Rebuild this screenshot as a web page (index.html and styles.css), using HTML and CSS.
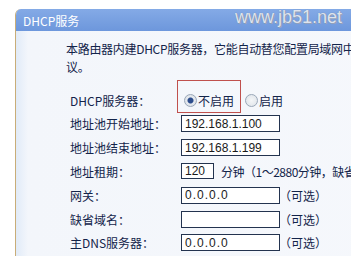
FILE: index.html
```html
<!DOCTYPE html>
<html lang="zh-CN">
<head>
  <meta charset="UTF-8">
  <meta name="viewport" content="width=device-width, initial-scale=1.0">
  <title>DHCP服务</title>
  <link rel="stylesheet" href="styles.css">
</head>
<body>
  <div class="page">
    <div class="panel">
      <div class="panel-head">
        <span class="title">DHCP服务</span>
        <span class="site">www.jb51.net</span>
      </div>
      <div class="panel-body">
        <p class="intro">本路由器内建DHCP服务器，它能自动替您配置局域网中各计算机的TCP/IP协<br>议。</p>
        <form class="form">
          <div class="row first">
            <label>DHCP服务器：</label>
            <div class="radios">
              <span class="annot"></span>
              <label class="opt"><input type="radio" name="dhcp" checked>不启用</label>
              <label class="opt"><input type="radio" name="dhcp">启用</label>
            </div>
          </div>
          <div class="row">
            <label for="start">地址池开始地址：</label>
            <input type="text" id="start" class="ip" value="192.168.1.100">
          </div>
          <div class="row">
            <label for="end">地址池结束地址：</label>
            <input type="text" id="end" class="ip" value="192.168.1.199">
          </div>
          <div class="row">
            <label for="lease">地址租期：</label>
            <input type="text" id="lease" class="short" value="120">
            <span class="hint">分钟（1～2880分钟，缺省为120分钟）</span>
          </div>
          <div class="row">
            <label for="gw">网关：</label>
            <input type="text" id="gw" class="ip dotted" value="0.0.0.0">
            <span class="opt-note">（可选）</span>
          </div>
          <div class="row">
            <label for="domain">缺省域名：</label>
            <input type="text" id="domain" class="ip" value="">
            <span class="opt-note">（可选）</span>
          </div>
          <div class="row">
            <label for="dns">主DNS服务器：</label>
            <input type="text" id="dns" class="ip dotted" value="0.0.0.0">
            <span class="opt-note">（可选）</span>
          </div>
        </form>
      </div>
    </div>
  </div>
</body>
</html>
```

FILE: styles.css
```css
* {
  margin: 0;
  padding: 0;
  box-sizing: border-box;
}

body {
  background: #ffffff;
  overflow: hidden;
  font-family: "Noto Sans CJK SC", "Noto Sans", sans-serif;
  font-size: 12px;
  color: #13244a;
}

.page {
  padding: 9px 0 0 15px;
}

.panel {
  position: relative;
  width: 440px;
  height: 260px;
  border-left: 1px solid #c9ad78;
  border-top-left-radius: 6px;
  overflow: hidden;
  background: linear-gradient(to right, #e1ebf8 0, #f3f6fb 12px, #f6f8fc 100%);
}

.panel-head {
  height: 22px;
  display: flex;
  align-items: center;
  background: linear-gradient(#84aae6, #6d97dc);
  color: #ffffff;
}

.title {
  width: 219px;
  padding-left: 7px;
  font-size: 12px;
}

.site {
  align-self: flex-start;
  margin-top: -4px;
  line-height: 24px;
  font-family: "Liberation Sans", Arial, sans-serif;
  font-size: 18px;
  color: #dde3ee;
  text-shadow: 0 0 1px #6f80a0, 1px 1px 0 #98a4be;
}

.panel-body {
  padding-left: 50px;
}

.intro {
  margin-top: 9px;
  line-height: 18px;
  letter-spacing: -0.3px;
  white-space: nowrap;
}

.form {
  margin-top: 12px;
  padding-left: 4px;
}

.row {
  display: flex;
  align-items: center;
  height: 23.8px;
  white-space: nowrap;
}

.row.first {
  height: 24px;
}

.row > label {
  width: 111px;
}

.radios {
  position: relative;
  display: flex;
  align-items: center;
  height: 24px;
  padding-left: 3px;
}

.annot {
  position: absolute;
  left: -4px;
  top: -8px;
  width: 64px;
  height: 33px;
  border: 1px solid #c0504d;
}

.opt {
  display: flex;
  align-items: center;
  gap: 1px;
  margin-right: 11px;
}

.opt input {
  appearance: none;
  width: 13px;
  height: 13px;
  border: 1px solid #9aa7b8;
  border-radius: 50%;
  background: radial-gradient(circle, #f4f6f8 0, #dde2e8 100%);
}

.opt input:checked {
  background: radial-gradient(circle, #2c4c8c 0, #2c4c8c 2.5px, #e6eaef 3.5px, #d5dbe3 100%);
}

input.ip,
input.short {
  height: 17px;
  border: 1px solid #23334f;
  background: #ffffff;
  padding: 0 3px;
  font-family: "Liberation Sans", Arial, sans-serif;
  font-size: 12px;
  color: #1a1a1a;
  outline: none;
}

input.ip {
  width: 99px;
}

input.short {
  width: 33px;
  height: 16px;
}

input.dotted {
  letter-spacing: 1px;
}

.hint {
  margin-left: 7px;
  letter-spacing: -0.5px;
}

.opt-note {
  margin-left: -1px;
}
```
